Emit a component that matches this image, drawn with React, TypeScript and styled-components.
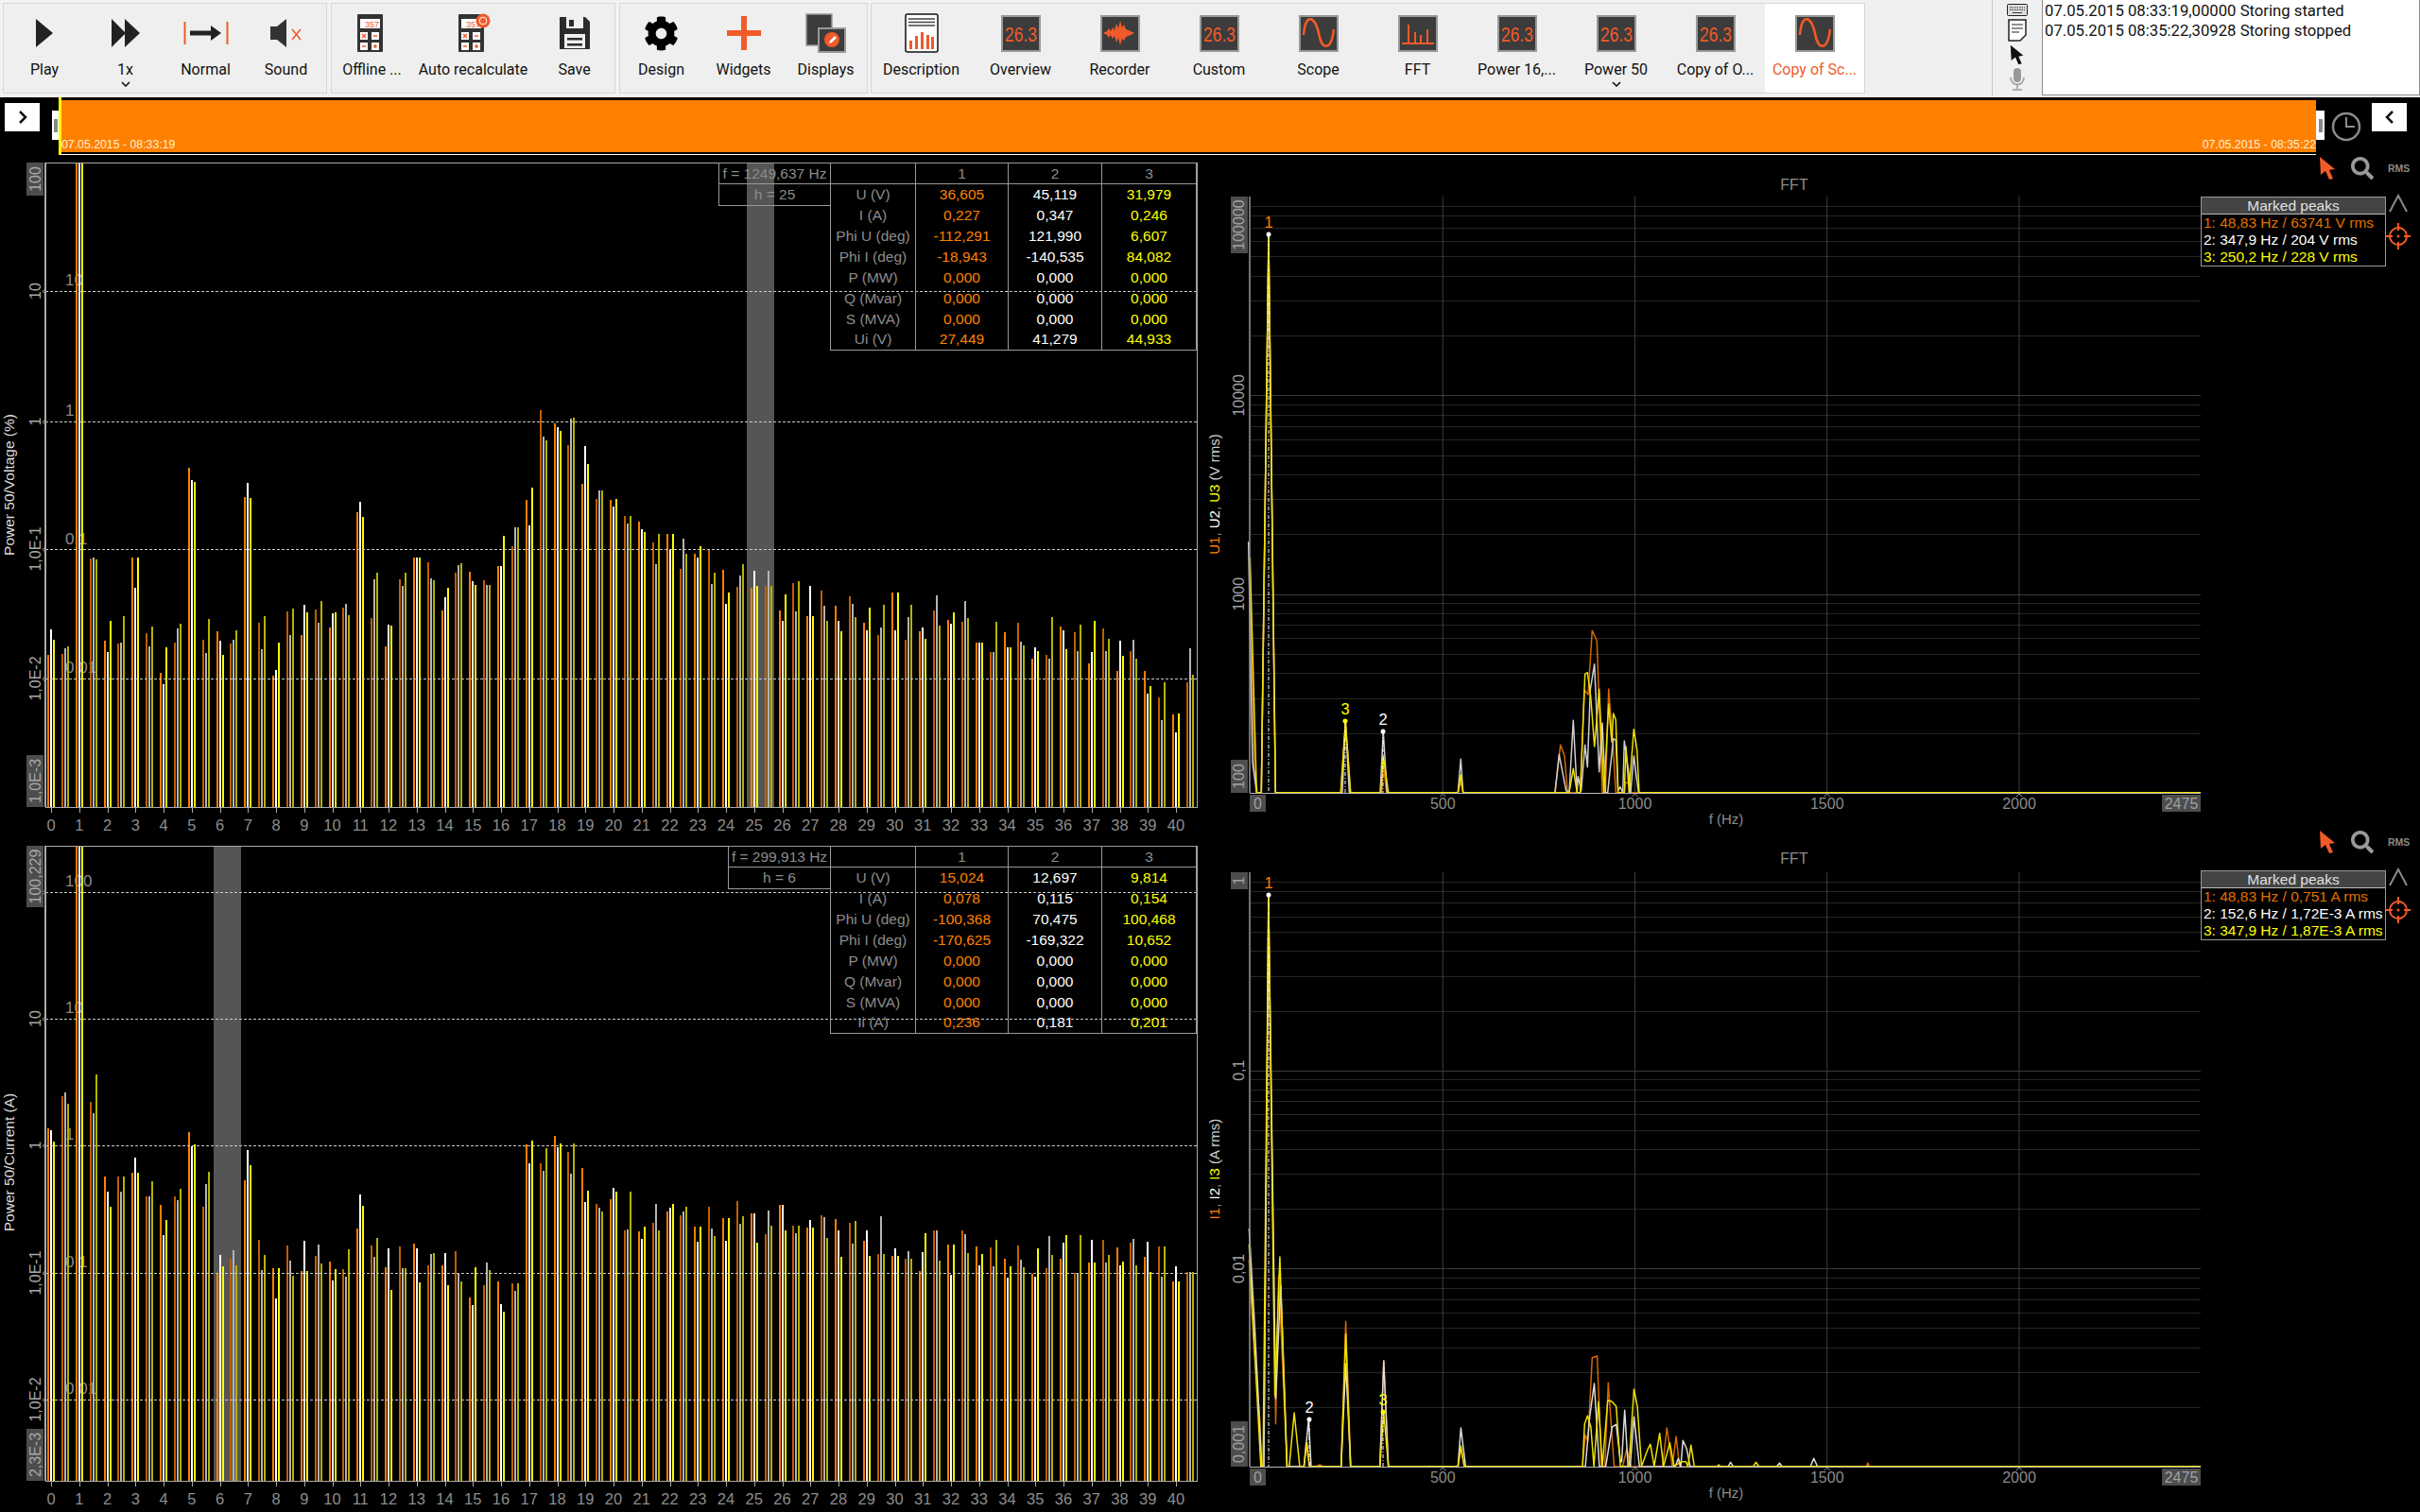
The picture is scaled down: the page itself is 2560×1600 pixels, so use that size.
import React from 'react'
import styled, { createGlobalStyle } from 'styled-components'
import { FaCog, FaSearch } from 'react-icons/fa'

const ACCENT = '#f15a29'
const ORANGE = '#ff8000'
const YELLOW = '#ffff00'
const DIM = '#8c8c8c'
const FONT = '"Liberation Sans", Arial, sans-serif'

const GlobalStyle = createGlobalStyle`
  html, body {
    margin: 0;
    padding: 0;
    background: #000;
    overflow: hidden;
  }
  body {
    font-family: ${FONT};
  }
`

const Page = styled.div`
  width: 2560px;
  height: 1600px;
  display: flex;
  flex-direction: column;
  background: #000;
  overflow: hidden;
`

/* ---------- toolbar ---------- */

const Toolbar = styled.div`
  height: 103px;
  display: flex;
  align-items: flex-start;
  background: #f2f2f2;
  padding-top: 3px;
  padding-left: 3px;
  box-sizing: border-box;
`

const Group = styled.div<{ $w: number; $gap?: number }>`
  width: ${(p) => p.$w}px;
  height: 96px;
  margin-right: ${(p) => p.$gap ?? 4}px;
  box-sizing: border-box;
  border: 1px solid #d6d6d6;
  background: #efefef;
  display: flex;
  flex-shrink: 0;
`

const ToolButton = styled.div<{ $w: number; $active?: boolean }>`
  width: ${(p) => p.$w}px;
  height: 100%;
  flex-shrink: 0;
  display: flex;
  flex-direction: column;
  align-items: center;
  padding-top: 10px;
  box-sizing: border-box;
  background: ${(p) => (p.$active ? '#fff' : 'transparent')};
`

const IconSlot = styled.div`
  height: 42px;
  display: flex;
  align-items: center;
  justify-content: center;
`

const ToolLabel = styled.div<{ $active?: boolean }>`
  margin-top: 8px;
  height: 20px;
  line-height: 20px;
  font-family: Roboto, sans-serif;
  font-size: 16px;
  white-space: nowrap;
  color: ${(p) => (p.$active ? ACCENT : '#111')};
`

const MoreMark = styled.svg`
  display: block;
  margin-top: 2px;
`

const ToolbarFill = styled.div`
  flex: 1;
  height: 100px;
  margin-top: -3px;
  display: flex;
  background: #f0f0f0;
`

const SideIcons = styled.div`
  width: 53px;
  margin-left: auto;
  height: 102px;
  border-left: 1px solid #c8c8c8;
  display: flex;
  flex-direction: column;
  align-items: center;
  padding-top: 4px;
  box-sizing: border-box;
  gap: 3px;
`

const LogBox = styled.div`
  width: 400px;
  height: 101px;
  box-sizing: border-box;
  flex-shrink: 0;
  background: #fff;
  border: 1px solid #8c8c8c;
  border-top: none;
  padding: 1px 0 0 2px;
  font-family: Roboto, sans-serif;
  font-size: 16.7px;
  line-height: 21px;
  color: #111;
`

/* ---------- timeline ---------- */

const Timeline = styled.div`
  height: 63px;
  display: flex;
  align-items: flex-start;
  background: #000;
`

const NavButton = styled.div<{ $ml: number }>`
  width: 37px;
  height: 30px;
  margin-top: 6px;
  margin-left: ${(p) => p.$ml}px;
  background: #fff;
  display: flex;
  align-items: center;
  justify-content: center;
  flex-shrink: 0;
`

const Handle = styled.div<{ $w: number; $ml: number }>`
  width: ${(p) => p.$w}px;
  height: 31px;
  margin-top: 14px;
  margin-left: ${(p) => p.$ml}px;
  background: #fff;
  display: flex;
  align-items: center;
  justify-content: center;
  flex-shrink: 0;
`

const Grip = styled.div`
  width: 4px;
  height: 14px;
  background: #8a8a8a;
`

const Track = styled.div`
  width: 2388px;
  height: 61px;
  flex-shrink: 0;
  box-sizing: border-box;
  border-left: 3px solid ${YELLOW};
  border-bottom: 1px solid #fff;
  padding: 3px 0 2px;
  background: #000;
  display: flex;
`

const TrackFill = styled.div`
  flex: 1;
  background: ${ORANGE};
  display: flex;
  justify-content: space-between;
  align-items: flex-end;
  font-size: 12.3px;
  line-height: 16px;
  color: #fff0d8;
`

const ClockSlot = styled.div`
  margin: 14px 0 0 7px;
  flex-shrink: 0;
  display: flex;
`

/* ---------- panels ---------- */

const Main = styled.div`
  flex: 1;
  display: flex;
`

const Column = styled.div<{ $w: number }>`
  width: ${(p) => p.$w}px;
  flex-shrink: 0;
  display: flex;
  flex-direction: column;
`

const Panel = styled.div<{ $h: number }>`
  position: relative;
  height: ${(p) => p.$h}px;
  display: flex;
  flex-shrink: 0;
`

const ChartSvg = styled.svg`
  display: block;
  flex-shrink: 0;
  font-family: ${FONT};
`

const Overlay = styled.div`
  position: absolute;
  top: 6px;
  right: 4px;
  display: flex;
  align-items: flex-start;
  font-size: 15.5px;
`

const FreqBox = styled.div<{ $w: number }>`
  width: ${(p) => p.$w}px;
  box-sizing: border-box;
  border: 1px solid #999;
  border-right: none;
  color: ${DIM};
  text-align: center;
`

const FreqRow = styled.div<{ $line?: boolean }>`
  height: 22px;
  line-height: 21px;
  box-sizing: border-box;
  white-space: nowrap;
  border-bottom: ${(p) => (p.$line ? '1px solid #999' : 'none')};
`

const Table = styled.table`
  border-collapse: collapse;
  table-layout: fixed;
  width: 387px;
  border: 1px solid #999;
`

const Th = styled.th`
  height: 22px;
  padding: 0;
  box-sizing: border-box;
  font-weight: normal;
  color: ${DIM};
  border: 1px solid #999;
`

const Td = styled.td<{ $c: string }>`
  height: 22px;
  padding: 0;
  box-sizing: border-box;
  text-align: center;
  line-height: 20px;
  color: ${(p) => p.$c};
  border-left: 1px solid #999;
`

const Aside = styled.div`
  width: 232px;
  flex-shrink: 0;
  display: flex;
  flex-direction: column;
`

const ToolRow = styled.div`
  height: 24px;
  display: flex;
  align-items: center;
  padding-left: 125px;
  gap: 16px;
`

const RmsTag = styled.span`
  font-size: 10.5px;
  font-weight: bold;
  color: #8a8a8a;
  margin-left: -1px;
`

const AsideBody = styled.div`
  margin-top: 18px;
  display: flex;
`

const PeakBox = styled.div`
  width: 196px;
  box-sizing: border-box;
  border: 1px solid #999;
  font-size: 15.5px;
  line-height: 18px;
`

const PeakHead = styled.div`
  height: 17px;
  line-height: 17px;
  background: #444;
  color: #e0e0e0;
  text-align: center;
  border-bottom: 1px solid #bbb;
  box-sizing: content-box;
`

const PeakRow = styled.div<{ $c: string }>`
  color: ${(p) => p.$c};
  padding-left: 2px;
  white-space: nowrap;
`

const PeakTools = styled.div`
  margin-top: -3px;
  width: 26px;
  display: flex;
  flex-direction: column;
  align-items: center;
  gap: 11px;
`

const AxisText = styled.text<{ $c?: string; $s?: number }>`
  fill: ${(p) => p.$c ?? DIM};
  font-size: ${(p) => p.$s ?? 16}px;
`

const BarRect = styled.rect`
  shape-rendering: crispEdges;
`

/* ---------- toolbar icons ---------- */

const Tile = ({ children }: { children: React.ReactNode }) => (
  <svg width="42" height="40" viewBox="0 0 42 40">
    <rect x="1" y="2" width="40" height="37" fill="#3c3c3c" stroke="#999" strokeWidth="2" />
    {children}
  </svg>
)

const Digits = () => (
  <text
    textAnchor="middle"
    transform="translate(21 28.500) scale(1 1.300)"
    fontSize="17.500"
    fontFamily="Liberation Sans"
    fill={ACCENT}
  >
    26.3
  </text>
)

const Calculator = ({ badge }: { badge?: boolean }) => (
  <svg width="36" height="42" viewBox="0 0 36 42">
    <rect x="2" y="1" width="27" height="40" rx="1" fill="#333" />
    <rect x="5" y="6" width="21" height="10" fill="#fff" />
    <text x="25" y="14.5" textAnchor="end" fontSize="9" fontFamily="Liberation Sans" fill={ACCENT}>
      357
    </text>
    <rect x="5" y="20" width="8" height="8" fill="#fff" />
    <rect x="17" y="20" width="8" height="8" fill="#fff" />
    <rect x="5" y="31" width="8" height="8" fill="#fff" />
    <rect x="17" y="31" width="8" height="8" fill="#fff" />
    <path d="M7 22l4 4M11 22l-4 4M19 24h4M7 35h4M19 35h4M21 33v4" stroke={ACCENT} strokeWidth="1.5" />
    {badge && (
      <>
        <circle cx="28" cy="8" r="7.5" fill={ACCENT} />
        <circle cx="28" cy="8" r="3.8" fill="none" stroke="#fff" strokeWidth="1" />
      </>
    )}
  </svg>
)

const PlayIcon = () => (
  <svg width="20" height="32" viewBox="0 0 20 32">
    <polygon points="1,1 19,16 1,31" fill="#222" />
  </svg>
)

const SpeedIcon = () => (
  <svg width="32" height="32" viewBox="0 0 32 32">
    <polygon points="1,1 16,16 1,31" fill="#222" />
    <polygon points="15,1 31,16 15,31" fill="#222" />
  </svg>
)

const NormalIcon = () => (
  <svg width="48" height="26" viewBox="0 0 48 26">
    <path d="M1.5 1v24M46.5 1v24" stroke={ACCENT} strokeWidth="2" />
    <polygon points="7,10.5 29,10.5 29,5 40,13 29,21 29,15.5 7,15.5" fill="#222" />
  </svg>
)

const SoundIcon = () => (
  <svg width="36" height="32" viewBox="0 0 36 32">
    <polygon points="1,9 8,9 18,1 18,31 8,23 1,23" fill="#333" />
    <path d="M24 12l9 11M33 12l-9 11" stroke={ACCENT} strokeWidth="1.6" />
  </svg>
)

const SaveIcon = () => (
  <svg width="34" height="36" viewBox="0 0 34 36">
    <path d="M1 1h27l5 5v29H1z" fill="#2b2b2b" />
    <path d="M8 1h18v12H8z" fill="#efefef" />
    <path d="M11 4h5v7h-5z" fill="#2b2b2b" />
    <path d="M6 19h22v15H6z" fill="#efefef" />
    <path d="M9 23h16v2.500H9zM9 29h16v2.500H9z" fill="#2b2b2b" />
  </svg>
)

const PlusIcon = () => (
  <svg width="36" height="36" viewBox="0 0 36 36">
    <path d="M15 0h6v15h15v6H21v15h-6V21H0v-6h15z" fill={ACCENT} />
  </svg>
)

const DisplaysIcon = () => (
  <svg width="44" height="42" viewBox="0 0 44 42">
    <rect x="1" y="1" width="27" height="33" fill="#3c3c3c" stroke="#999" strokeWidth="1.500" />
    <rect x="14" y="16" width="28" height="25" fill="#3c3c3c" stroke="#999" strokeWidth="2" />
    <circle cx="28" cy="28" r="8" fill={ACCENT} />
    <path d="M25 32l1-3 5-5 2 2-5 5z" fill="#fff" />
  </svg>
)

const DescriptionIcon = () => (
  <svg width="36" height="42" viewBox="0 0 36 42">
    <rect x="1" y="1" width="34" height="40" rx="2" fill="#fff" stroke="#111" strokeWidth="1.500" />
    <path d="M4 6h28M4 9.500h28M4 13h28" stroke="#444" strokeWidth="1.500" />
    <path d="M5 38v-9h3v9zM11 38V24h3v14zM17 38V20h3v18zM23 38V23h3v15zM28 38V25h3v13z" fill={ACCENT} />
  </svg>
)

const WaveTile = () => (
  <Tile>
    <polygon
      points="3,20 7,18 9,15 11,18 13,14 15,17 17,10 19,15 21,7 23,14 25,11 27,16 30,17 32,18 36,20 32,22 30,23 27,24 25,28 23,26 21,33 19,25 17,30 15,23 13,26 11,22 9,25 7,22"
      fill={ACCENT}
    />
  </Tile>
)

const SineTile = () => (
  <Tile>
    <path d="M5 22C7 -2 17 2 21 20C24 38 34 40 37 16" fill="none" stroke={ACCENT} strokeWidth="2.500" />
  </Tile>
)

const FftTile = () => (
  <Tile>
    <path d="M4 31h34M11 31V11M18 31V19M24 31V22M31 31V16" fill="none" stroke={ACCENT} strokeWidth="2" />
  </Tile>
)

const Chevron = () => (
  <MoreMark width="10" height="6" viewBox="0 0 10 6">
    <path d="M1 1l4 4 4-4" fill="none" stroke="#111" strokeWidth="1.600" />
  </MoreMark>
)

const Pointer = ({ c, h = 26 }: { c: string; h?: number }) => (
  <svg width={(h * 18) / 26} height={h} viewBox="0 0 18 26">
    <polygon points="1,1 17,14 11,15 15,24 11,25 7,16 2,20" fill={c} />
  </svg>
)

const Crosshair = () => (
  <svg width="26" height="28" viewBox="0 0 26 28">
    <circle cx="13" cy="14" r="9" fill="none" stroke={ACCENT} strokeWidth="2" />
    <circle cx="13" cy="14" r="1.500" fill={ACCENT} />
    <path d="M13 0v8M13 20v8M0 14h7M19 14h7" stroke={ACCENT} strokeWidth="2" />
  </svg>
)

const Caret = () => (
  <svg width="22" height="20" viewBox="0 0 22 20">
    <path d="M2 19L11 2l9 17" fill="none" stroke="#8a8a8a" strokeWidth="2" />
  </svg>
)

/* ---------- harmonic bar charts ---------- */

const BAR_ORANGE = [ORANGE, '#c06000']
const BAR_WHITE = ['#ffffff', '#b4b4b4']
const BAR_YELLOW = [YELLOW, '#b4b400']

// tops of the bars (page px) up to h14.5, read off the reference
const voltageHead: number[][] = [
  [693, 666, 677], [692, 686, 684], [172, 172, 172], [591, 590, 592], [678, 690, 657], [681, 680, 652],
  [590, 622, 590], [670, 684, 663], [712, 724, 685], [680, 665, 660], [495, 508, 510], [677, 691, 655],
  [668, 678, 693], [681, 677, 667], [526, 511, 527], [659, 687, 652], [715, 709, 680], [647, 672, 644],
  [672, 640, 648], [645, 659, 636], [664, 649, 648], [643, 639, 651], [542, 531, 547], [654, 613, 606],
  [684, 661, 662], [613, 620, 606], [590, 590, 590], [595, 612, 614], [646, 632, 622], [606, 598, 596],
]

const voltageTail = [
  600, 575, 555, 550, 510, 425, 445, 440, 470, 495, 510, 520, 550, 565, 565, 570, 575, 575, 600, 590, 600, 600,
  610, 615, 620, 625, 625, 625, 625, 630, 625, 635, 635, 630, 645, 635, 640, 650, 645, 640, 650, 650, 640, 650,
  655, 655, 670, 670, 700, 720, 730, 685,
]

const currentEnvelope = [
  1163, 1151, 896, 1137, 1245, 1245, 1225, 1250, 1275, 1255, 1175, 1235, 1315, 1295, 1205, 1300, 1330, 1310, 1305,
  1310, 1320, 1305, 1255, 1285, 1320, 1310, 1310, 1320, 1325, 1310, 1335, 1330, 1350, 1320, 1197, 1197, 1197, 1210,
  1225, 1235, 1250, 1255, 1265, 1265, 1265, 1265, 1270, 1270, 1275, 1265, 1270, 1265, 1275, 1275, 1285, 1285, 1285,
  1290, 1295, 1285, 1295, 1290, 1300, 1290, 1305, 1295, 1300, 1305, 1305, 1295, 1310, 1305, 1305, 1305, 1310, 1310,
  1310, 1310, 1310, 1315, 1320, 1310,
]

const spread = (env: number[], seed: number, top: number) => {
  let s = seed
  const next = () => {
    s = (s * 1103515245 + 12345) & 0x7fffffff
    return (s >> 8) % 48
  }
  return env.map((v) => (v <= top + 2 ? [top, top, top] : [v + next(), v + next(), v + next()]))
}

const voltageBars = [...voltageHead, ...spread(voltageTail, 7, 172)]
const currentBars = spread(currentEnvelope, 21, 896)

type Tick = { y: number; label: string }

type HarmonicProps = {
  originY: number
  height: number
  top: number
  bottom: number
  title: string
  titleY: number
  topPill: string
  topPillEnd: number
  bottomPill: string
  bottomPillStart: number
  ticks: Tick[]
  inner: { y: number; text: string }[]
  band: number
  bars: number[][]
}

const harmonicX = (h: number) => 54 + 29.75 * h

const HarmonicChart = (p: HarmonicProps) => {
  const pillText = (y: number, t: string) => (
    <AxisText x={43} y={y} textAnchor="middle" transform={`rotate(-90 43 ${y})`} $c="#a8a8a8">
      {t}
    </AxisText>
  )
  return (
    <ChartSvg width={1270} height={p.height} viewBox={`0 ${p.originY} 1270 ${p.height}`}>
      <AxisText x={15} y={p.titleY} textAnchor="middle" transform={`rotate(-90 15 ${p.titleY})`} $c="#ddd" $s={15.5}>
        {p.title}
      </AxisText>
      <BarRect x={p.band} y={p.top} width={29} height={p.bottom - p.top} fill="#555" />
      {p.inner.map((t) => (
        <AxisText key={t.text} x={69} y={t.y} $c="#8c8c8c" $s={17}>
          {t.text}
        </AxisText>
      ))}
      {p.bars.map((triple, i) => {
        const half = i % 2
        const cx = Math.round(harmonicX(i / 2))
        return [BAR_ORANGE, BAR_WHITE, BAR_YELLOW].map((c, k) => (
          <BarRect
            key={`${i}-${k}`}
            x={cx - 4 + k * 3}
            y={triple[k]}
            width={2}
            height={Math.max(0, p.bottom - triple[k])}
            fill={c[half]}
          />
        ))
      })}
      {p.ticks.map((t) => (
        <g key={t.y}>
          <line x1={48} x2={1266} y1={t.y + 0.5} y2={t.y + 0.5} stroke="#c8c8c8" strokeDasharray="3 2" />
          <path d={`M49 ${t.y - 3}l-4 3.500 4 3.500`} fill="none" stroke="#aaa" />
          {pillText(t.y, t.label)}
        </g>
      ))}
      <BarRect x={28} y={p.top} width={18} height={p.topPillEnd - p.top} fill="#4d4d4d" />
      {pillText((p.top + p.topPillEnd) / 2, p.topPill)}
      <BarRect x={28} y={p.bottomPillStart} width={18} height={p.bottom - p.bottomPillStart} fill="#4d4d4d" />
      {pillText((p.bottomPillStart + p.bottom) / 2, p.bottomPill)}
      <BarRect x={48} y={p.top} width={1218} height={p.bottom - p.top} fill="none" stroke="#aaa" />
      <BarRect x={47} y={p.top} width={2} height={p.bottom - p.top} fill="#aaa" />
      {Array.from({ length: 41 }, (_, h) => (
        <g key={h}>
          <line
            x1={Math.round(harmonicX(h)) + 0.5}
            x2={Math.round(harmonicX(h)) + 0.5}
            y1={p.bottom}
            y2={p.bottom + 6}
            stroke="#aaa"
          />
          <AxisText x={harmonicX(h)} y={p.bottom + 25} textAnchor="middle" $s={16.5}>
            {h}
          </AxisText>
        </g>
      ))}
    </ChartSvg>
  )
}

const Measurements = ({
  freq,
  order,
  w,
  rows,
}: {
  freq: string
  order: string
  w: number
  rows: [string, string, string, string][]
}) => (
  <Overlay>
    <FreqBox $w={w}>
      <FreqRow $line>{freq}</FreqRow>
      <FreqRow>{order}</FreqRow>
    </FreqBox>
    <Table>
      <colgroup>
        <col width="90" />
        <col width="98" />
        <col width="99" />
        <col width="100" />
      </colgroup>
      <thead>
        <tr>
          <Th />
          <Th>1</Th>
          <Th>2</Th>
          <Th>3</Th>
        </tr>
      </thead>
      <tbody>
        {rows.map((r) => (
          <tr key={r[0]}>
            <Td $c={DIM}>{r[0]}</Td>
            <Td $c={ORANGE}>{r[1]}</Td>
            <Td $c="#fff">{r[2]}</Td>
            <Td $c={YELLOW}>{r[3]}</Td>
          </tr>
        ))}
      </tbody>
    </Table>
  </Overlay>
)

/* ---------- fft charts ---------- */

type Pt = [number, number]

const pointsFrom = (pts: Pt[], ox: number, sx: number, oy: number) =>
  pts.map(([x, y]) => `${(ox + x / sx).toFixed(1)},${(oy + y / 3).toFixed(1)}`).join(' ')

const voltOrange: Pt[] = [
  [127, -130], [140, 520], [150, 596], [163, 596], [186, -1150], [208, 596], [415, 596], [430, 372], [446, 596],
  [545, 596], [550, 500], [560, 596], [787, 596], [796, 560], [803, 596], [1095, 596], [1112, 445], [1125, 480],
  [1135, 596], [1175, 596], [1188, 270], [1200, 285], [1213, 82], [1228, 115], [1245, 596], [1255, 596], [1265, 268],
  [1278, 430], [1288, 596], [1315, 596], [1318, 565], [1330, 565], [1335, 596], [3144, 596],
]

const voltWhite: Pt[] = [
  [122, -200], [135, 500], [148, 596], [163, 596], [186, -1170], [208, 596], [420, 596], [430, 372], [442, 596],
  [540, 596], [550, 403], [562, 596], [787, 596], [796, 490], [803, 596], [1095, 596], [1108, 475], [1130, 590],
  [1140, 596], [1153, 367], [1165, 596], [1168, 545], [1178, 590], [1190, 445], [1198, 515], [1207, 270], [1220, 188],
  [1235, 530], [1245, 375], [1255, 596], [1262, 596], [1280, 425], [1288, 430], [1295, 590], [1302, 578], [1310, 596],
  [1315, 432], [1330, 540], [1335, 596], [1345, 480], [1360, 596], [3144, 596],
]

const voltYellow: Pt[] = [
  [127, -150], [148, 596], [163, 596], [186, -1176], [208, 596], [415, 596], [430, 370], [446, 596], [542, 596],
  [550, 480], [566, 596], [787, 596], [796, 540], [803, 596], [1130, 596], [1140, 596], [1153, 520], [1165, 596],
  [1175, 596], [1190, 220], [1198, 215], [1208, 290], [1220, 450], [1235, 268], [1250, 596], [1265, 315], [1275, 435],
  [1280, 345], [1288, 365], [1295, 596], [1315, 596], [1320, 450], [1330, 596], [1345, 395], [1355, 460], [1362, 596],
  [3144, 596],
]

const ampOrange: Pt[] = [
  [115, -200], [127, 85], [140, 300], [145, 456], [150, 456], [161, -1340], [178, 320], [185, -150], [205, 456],
  [245, 456], [250, 380], [258, 456], [275, 456], [282, 450], [290, 456], [333, 456], [344, -5], [356, 456], [425, 456],
  [434, 120], [445, 456], [610, 456], [617, 400], [625, 456], [905, 456], [912, 355], [918, 375], [928, 110], [940, 105],
  [950, 456], [958, 456], [966, 190], [980, 456], [1000, 456], [1010, 400], [1020, 456], [1095, 456], [1105, 333],
  [1118, 456], [1127, 360], [1135, 456], [1578, 456], [1581, 444], [1585, 456], [2370, 456],
]

const ampWhite: Pt[] = [
  [115, -300], [128, 0], [145, 456], [150, 456], [161, -1350], [178, 240], [190, -120], [205, 456], [245, 456],
  [256, 307], [262, 456], [333, 456], [344, 130], [356, 456], [425, 456], [434, 120], [445, 456], [610, 456], [617, 333],
  [628, 456], [912, 456], [922, 300], [933, 192], [945, 456], [960, 456], [975, 330], [985, 322], [995, 440], [998, 440],
  [1005, 277], [1013, 456], [1018, 456], [1027, 298], [1040, 456], [1125, 456], [1132, 430], [1138, 456], [1143, 373],
  [1152, 400], [1160, 456], [1250, 456], [1256, 442], [1262, 456], [1365, 456], [1372, 445], [1378, 456], [1445, 456],
  [1453, 430], [1462, 456], [2370, 456],
]

const ampYellow: Pt[] = [
  [115, -250], [127, 60], [143, 456], [148, 456], [161, -1359], [176, 230], [188, -210], [205, 456], [210, 456],
  [222, 285], [235, 455], [245, 455], [252, 380], [258, 455], [333, 455], [344, 35], [355, 455], [425, 455], [434, 285],
  [445, 455], [610, 455], [617, 390], [625, 455], [905, 455], [910, 320], [917, 295], [925, 330], [932, 455], [943, 250],
  [952, 455], [965, 245], [975, 250], [985, 265], [995, 455], [1015, 455], [1027, 210], [1035, 265], [1045, 455],
  [1060, 400], [1066, 385], [1075, 455], [1088, 350], [1097, 455], [1112, 380], [1122, 455], [1140, 440], [1150, 440],
  [1155, 455], [1162, 388], [1170, 455], [1225, 455], [1228, 450], [1232, 455], [1310, 455], [1316, 442], [1323, 455],
  [2370, 455],
]

type Marker = { x: number; y: number; label: string; c: string }

type SpectrumProps = {
  originY: number
  height: number
  top: number
  bottom: number
  decades: number
  labels: string[]
  pillEnd: number
  bottomPillStart: number
  titleY: number
  axisTitleY: number
  axis: [string, string, string, string]
  series: { pts: string; c: string }[]
  markers: Marker[]
}

const FREQ_X = (f: number) => 1323 + f * 0.4065

const SpectrumChart = (p: SpectrumProps) => {
  const decade = (p.bottom - p.top) / p.decades
  const rows: { y: number; major: boolean }[] = []
  for (let d = 0; d < p.decades; d++) {
    const base = p.top + d * decade
    for (let m = 9; m >= 2; m--) rows.push({ y: base + decade * (1 - Math.log10(m)), major: false })
    if (d > 0) rows.push({ y: base, major: true })
  }
  const rotated = (y: number, t: string, c = '#a0a0a0') => (
    <AxisText x={1316} y={y} textAnchor="middle" transform={`rotate(-90 1316 ${y})`} $c={c}>
      {t}
    </AxisText>
  )
  return (
    <ChartSvg width={1058} height={p.height} viewBox={`1270 ${p.originY} 1058 ${p.height}`}>
      <AxisText x={1898} y={p.titleY} textAnchor="middle" $c={DIM} $s={16}>
        FFT
      </AxisText>
      {rows.map((r, i) => (
        <line
          key={i}
          x1={1323}
          x2={2328}
          y1={Math.round(r.y) + 0.5}
          y2={Math.round(r.y) + 0.5}
          stroke={r.major ? '#3a3a3a' : '#262626'}
        />
      ))}
      {[500, 1000, 1500, 2000].map((f) => (
        <line key={f} x1={FREQ_X(f)} x2={FREQ_X(f)} y1={p.top} y2={p.bottom} stroke="#3d3d3d" />
      ))}
      <AxisText
        x={1290}
        y={p.axisTitleY}
        textAnchor="middle"
        transform={`rotate(-90 1290 ${p.axisTitleY})`}
        $c={DIM}
        $s={15}
      >
        <tspan fill={ORANGE}>{p.axis[0]}</tspan>
        <tspan>, </tspan>
        <tspan fill="#fff">{p.axis[1]}</tspan>
        <tspan>, </tspan>
        <tspan fill={YELLOW}>{p.axis[2]}</tspan>
        <tspan fill="#ccc"> {p.axis[3]}</tspan>
      </AxisText>
      <rect x={1302} y={p.top} width={18} height={p.pillEnd - p.top} fill="#4d4d4d" />
      {rotated((p.top + p.pillEnd) / 2, p.labels[0])}
      {p.labels.slice(1, -1).map((t, i) => (
        <g key={t}>{rotated(p.top + (i + 1) * decade, t)}</g>
      ))}
      <rect x={1302} y={p.bottomPillStart} width={18} height={p.bottom - p.bottomPillStart} fill="#4d4d4d" />
      {rotated((p.bottomPillStart + p.bottom) / 2, p.labels[p.labels.length - 1])}
      {p.series.map((s) => (
        <polyline key={s.c} points={s.pts} fill="none" stroke={s.c} strokeWidth={1.5} strokeLinejoin="round" />
      ))}
      <line x1={1322} x2={1322} y1={p.top} y2={p.bottom} stroke="#999" strokeWidth={1.5} />
      <line x1={1322} x2={2328} y1={p.bottom + 0.5} y2={p.bottom + 0.5} stroke="#b8b8b8" />
      {p.markers.map((m) => (
        <g key={m.label}>
          <line x1={m.x} x2={m.x} y1={m.y} y2={p.bottom} stroke="#fff" strokeDasharray="4 2 1 2" />
          <circle cx={m.x} cy={m.y} r={2.5} fill={m.c === ORANGE ? '#fff' : m.c} />
          <AxisText x={m.x} y={m.y - 7} textAnchor="middle" $c={m.c} $s={16.5}>
            {m.label}
          </AxisText>
        </g>
      ))}
      <rect x={1322} y={p.bottom + 2} width={17} height={18} fill="#4d4d4d" />
      <AxisText x={1330.5} y={p.bottom + 17} textAnchor="middle" $c="#a0a0a0">
        0
      </AxisText>
      {[500, 1000, 1500, 2000].map((f) => (
        <g key={f}>
          <path
            d={`M${FREQ_X(f) - 3} ${p.bottom + 4}l3-3 3 3`}
            fill="none"
            stroke="#999"
          />
          <AxisText x={FREQ_X(f)} y={p.bottom + 17} textAnchor="middle">
            {f}
          </AxisText>
        </g>
      ))}
      <rect x={2287} y={p.bottom + 2} width={41} height={18} fill="#4d4d4d" />
      <AxisText x={2307.5} y={p.bottom + 17} textAnchor="middle" $c="#a0a0a0">
        2475
      </AxisText>
      <AxisText x={1826} y={p.bottom + 33} textAnchor="middle" $s={15}>
        f (Hz)
      </AxisText>
    </ChartSvg>
  )
}

const PeakSide = ({ rows }: { rows: [string, string][] }) => (
  <Aside>
    <ToolRow>
      <Pointer c={ACCENT} />
      <FaSearch size={24} color="#9a9a9a" />
      <RmsTag>RMS</RmsTag>
    </ToolRow>
    <AsideBody>
      <PeakBox>
        <PeakHead>Marked peaks</PeakHead>
        {rows.map(([c, t]) => (
          <PeakRow key={t} $c={c}>
            {t}
          </PeakRow>
        ))}
      </PeakBox>
      <PeakTools>
        <Caret />
        <Crosshair />
      </PeakTools>
    </AsideBody>
  </Aside>
)

const voltageRows: [string, string, string, string][] = [
  ['U (V)', '36,605', '45,119', '31,979'],
  ['I (A)', '0,227', '0,347', '0,246'],
  ['Phi U (deg)', '-112,291', '121,990', '6,607'],
  ['Phi I (deg)', '-18,943', '-140,535', '84,082'],
  ['P (MW)', '0,000', '0,000', '0,000'],
  ['Q (Mvar)', '0,000', '0,000', '0,000'],
  ['S (MVA)', '0,000', '0,000', '0,000'],
  ['Ui (V)', '27,449', '41,279', '44,933'],
]

const currentRows: [string, string, string, string][] = [
  ['U (V)', '15,024', '12,697', '9,814'],
  ['I (A)', '0,078', '0,115', '0,154'],
  ['Phi U (deg)', '-100,368', '70,475', '100,468'],
  ['Phi I (deg)', '-170,625', '-169,322', '10,652'],
  ['P (MW)', '0,000', '0,000', '0,000'],
  ['Q (Mvar)', '0,000', '0,000', '0,000'],
  ['S (MVA)', '0,000', '0,000', '0,000'],
  ['Ii (A)', '0,236', '0,181', '0,201'],
]

const App = () => (
  <Page>
    <GlobalStyle />
    <Toolbar>
      <Group $w={343}>
        <ToolButton $w={86}>
          <IconSlot><PlayIcon /></IconSlot>
          <ToolLabel>Play</ToolLabel>
        </ToolButton>
        <ToolButton $w={85}>
          <IconSlot><SpeedIcon /></IconSlot>
          <ToolLabel>1x</ToolLabel>
          <Chevron />
        </ToolButton>
        <ToolButton $w={85}>
          <IconSlot><NormalIcon /></IconSlot>
          <ToolLabel>Normal</ToolLabel>
        </ToolButton>
        <ToolButton $w={85}>
          <IconSlot><SoundIcon /></IconSlot>
          <ToolLabel>Sound</ToolLabel>
        </ToolButton>
      </Group>
      <Group $w={301}>
        <ToolButton $w={85}>
          <IconSlot><Calculator /></IconSlot>
          <ToolLabel>Offline ...</ToolLabel>
        </ToolButton>
        <ToolButton $w={129}>
          <IconSlot><Calculator badge /></IconSlot>
          <ToolLabel>Auto recalculate</ToolLabel>
        </ToolButton>
        <ToolButton $w={85}>
          <IconSlot><SaveIcon /></IconSlot>
          <ToolLabel>Save</ToolLabel>
        </ToolButton>
      </Group>
      <Group $w={263} $gap={3}>
        <ToolButton $w={87}>
          <IconSlot><FaCog size={37} color="#000" /></IconSlot>
          <ToolLabel>Design</ToolLabel>
        </ToolButton>
        <ToolButton $w={87}>
          <IconSlot><PlusIcon /></IconSlot>
          <ToolLabel>Widgets</ToolLabel>
        </ToolButton>
        <ToolButton $w={87}>
          <IconSlot><DisplaysIcon /></IconSlot>
          <ToolLabel>Displays</ToolLabel>
        </ToolButton>
      </Group>
      <Group $w={1052} $gap={0}>
        <ToolButton $w={105}>
          <IconSlot><DescriptionIcon /></IconSlot>
          <ToolLabel>Description</ToolLabel>
        </ToolButton>
        <ToolButton $w={105}>
          <IconSlot><Tile><Digits /></Tile></IconSlot>
          <ToolLabel>Overview</ToolLabel>
        </ToolButton>
        <ToolButton $w={105}>
          <IconSlot><WaveTile /></IconSlot>
          <ToolLabel>Recorder</ToolLabel>
        </ToolButton>
        <ToolButton $w={105}>
          <IconSlot><Tile><Digits /></Tile></IconSlot>
          <ToolLabel>Custom</ToolLabel>
        </ToolButton>
        <ToolButton $w={105}>
          <IconSlot><SineTile /></IconSlot>
          <ToolLabel>Scope</ToolLabel>
        </ToolButton>
        <ToolButton $w={105}>
          <IconSlot><FftTile /></IconSlot>
          <ToolLabel>FFT</ToolLabel>
        </ToolButton>
        <ToolButton $w={105}>
          <IconSlot><Tile><Digits /></Tile></IconSlot>
          <ToolLabel>Power 16,...</ToolLabel>
        </ToolButton>
        <ToolButton $w={105}>
          <IconSlot><Tile><Digits /></Tile></IconSlot>
          <ToolLabel>Power 50</ToolLabel>
          <Chevron />
        </ToolButton>
        <ToolButton $w={105}>
          <IconSlot><Tile><Digits /></Tile></IconSlot>
          <ToolLabel>Copy of O...</ToolLabel>
        </ToolButton>
        <ToolButton $w={105} $active>
          <IconSlot><SineTile /></IconSlot>
          <ToolLabel $active>Copy of Sc...</ToolLabel>
        </ToolButton>
      </Group>
      <ToolbarFill>
        <SideIcons>
          <svg width="22" height="13" viewBox="0 0 22 13">
            <rect x="0.5" y="0.5" width="21" height="12" rx="1" fill="#ddd" stroke="#222" />
            <path d="M3 4h16M3 6.500h16" stroke="#333" strokeDasharray="1.500 1" />
            <path d="M6 9.500h10" stroke="#333" />
          </svg>
          <svg width="20" height="24" viewBox="0 0 20 24">
            <path d="M1 1h18v16l-6 6H1z" fill="#fff" stroke="#222" strokeWidth="1.500" />
            <path d="M4 6h12M4 10h12M4 14h8" stroke="#222" />
          </svg>
          <Pointer c="#111" h={22} />
          <svg width="16" height="24" viewBox="0 0 16 24">
            <rect x="4" y="0" width="8" height="15" rx="4" fill="#999" />
            <path d="M1 10c0 10 14 10 14 0M8 18v4M3 23h10" fill="none" stroke="#999" strokeWidth="1.500" />
          </svg>
        </SideIcons>
        <LogBox>
          07.05.2015 08:33:19,00000 Storing started
          <br />
          07.05.2015 08:35:22,30928 Storing stopped
        </LogBox>
      </ToolbarFill>
    </Toolbar>

    <Timeline>
      <NavButton $ml={5}>
        <svg width="10" height="16" viewBox="0 0 10 16">
          <path d="M2 2l6 6-6 6" fill="none" stroke="#111" strokeWidth="2.500" />
        </svg>
      </NavButton>
      <Handle $w={7} $ml={13}>
        <Grip />
      </Handle>
      <Track>
        <TrackFill>
          <span>07.05.2015 - 08:33:19</span>
          <span>07.05.2015 - 08:35:22</span>
        </TrackFill>
      </Track>
      <Handle $w={9} $ml={0}>
        <Grip />
      </Handle>
      <ClockSlot>
        <svg width="32" height="34" viewBox="0 0 32 34">
          <circle cx="16" cy="17" r="14" fill="none" stroke="#8a8a8a" strokeWidth="2.500" />
          <path d="M16 7v10h9" fill="none" stroke="#8a8a8a" strokeWidth="2" />
        </svg>
      </ClockSlot>
      <NavButton $ml={11}>
        <svg width="10" height="16" viewBox="0 0 10 16">
          <path d="M8 2L2 8l6 6" fill="none" stroke="#111" strokeWidth="2.500" />
        </svg>
      </NavButton>
    </Timeline>

    <Main>
      <Column $w={1270}>
        <Panel $h={723}>
          <HarmonicChart
            originY={166}
            height={723}
            top={172}
            bottom={854}
            title="Power 50/Voltage (%)"
            titleY={513}
            topPill="100"
            topPillEnd={207}
            bottomPill="1,0E-3"
            bottomPillStart={799}
            ticks={[
              { y: 308, label: '10' },
              { y: 446, label: '1' },
              { y: 581, label: '1,0E-1' },
              { y: 718, label: '1,0E-2' },
            ]}
            inner={[
              { y: 302, text: '10' },
              { y: 440, text: '1' },
              { y: 576, text: '0,1' },
              { y: 712, text: '0,01' },
            ]}
            band={790}
            bars={voltageBars}
          />
          <Measurements
            freq="f = 1249,637 Hz"
            order="h = 25"
            w={118}
            rows={voltageRows}
          />
        </Panel>
        <Panel $h={711}>
          <HarmonicChart
            originY={889}
            height={711}
            top={895}
            bottom={1567}
            title="Power 50/Current (A)"
            titleY={1230}
            topPill="100,229"
            topPillEnd={960}
            bottomPill="2,3E-3"
            bottomPillStart={1512}
            ticks={[
              { y: 944, label: '' },
              { y: 1078, label: '10' },
              { y: 1212, label: '1' },
              { y: 1347, label: '1,0E-1' },
              { y: 1481, label: '1,0E-2' },
            ]}
            inner={[
              { y: 938, text: '100' },
              { y: 1072, text: '10' },
              { y: 1206, text: '1' },
              { y: 1341, text: '0,1' },
              { y: 1475, text: '0,01' },
            ]}
            band={226}
            bars={currentBars}
          />
          <Measurements
            freq="f = 299,913 Hz"
            order="h = 6"
            w={108}
            rows={currentRows}
          />
        </Panel>
      </Column>
      <Column $w={1290}>
        <Panel $h={713}>
          <SpectrumChart
            originY={166}
            height={713}
            top={208}
            bottom={839}
            decades={3}
            labels={['100000', '10000', '1000', '100']}
            pillEnd={268}
            bottomPillStart={804}
            titleY={201}
            axisTitleY={523}
            axis={['U1', 'U2', 'U3', '(V rms)']}
            series={[
              { pts: pointsFrom(voltOrange, 1280, 3, 640), c: '#d06a00' },
              { pts: pointsFrom(voltWhite, 1280, 3, 640), c: '#cfcfcf' },
              { pts: pointsFrom(voltYellow, 1280, 3, 640), c: '#f0e000' },
            ]}
            markers={[
              { x: 1342, y: 248, label: '1', c: ORANGE },
              { x: 1423, y: 763, label: '3', c: YELLOW },
              { x: 1463, y: 774, label: '2', c: '#ffffff' },
            ]}
          />
          <PeakSide
            rows={[
              ['#e07000', '1: 48,83 Hz / 63741 V rms'],
              ['#fff', '2: 347,9 Hz / 204 V rms'],
              [YELLOW, '3: 250,2 Hz / 228 V rms'],
            ]}
          />
        </Panel>
        <Panel $h={721}>
          <SpectrumChart
            originY={879}
            height={721}
            top={923}
            bottom={1552}
            decades={3}
            labels={['1', '0,1', '0,01', '0,001']}
            pillEnd={941}
            bottomPillStart={1504}
            titleY={914}
            axisTitleY={1237}
            axis={['I1', 'I2', 'I3', '(A rms)']}
            series={[
              { pts: pointsFrom(ampOrange, 1270, 2.24, 1400), c: '#d06a00' },
              { pts: pointsFrom(ampWhite, 1270, 2.24, 1400), c: '#dcdcdc' },
              { pts: pointsFrom(ampYellow, 1270, 2.24, 1400), c: '#f0e000' },
            ]}
            markers={[
              { x: 1342, y: 947, label: '1', c: ORANGE },
              { x: 1385, y: 1502, label: '2', c: '#ffffff' },
              { x: 1463, y: 1494, label: '3', c: YELLOW },
            ]}
          />
          <PeakSide
            rows={[
              ['#e07000', '1: 48,83 Hz / 0,751 A rms'],
              ['#fff', '2: 152,6 Hz / 1,72E-3 A rms'],
              [YELLOW, '3: 347,9 Hz / 1,87E-3 A rms'],
            ]}
          />
        </Panel>
      </Column>
    </Main>
  </Page>
)

export default App
